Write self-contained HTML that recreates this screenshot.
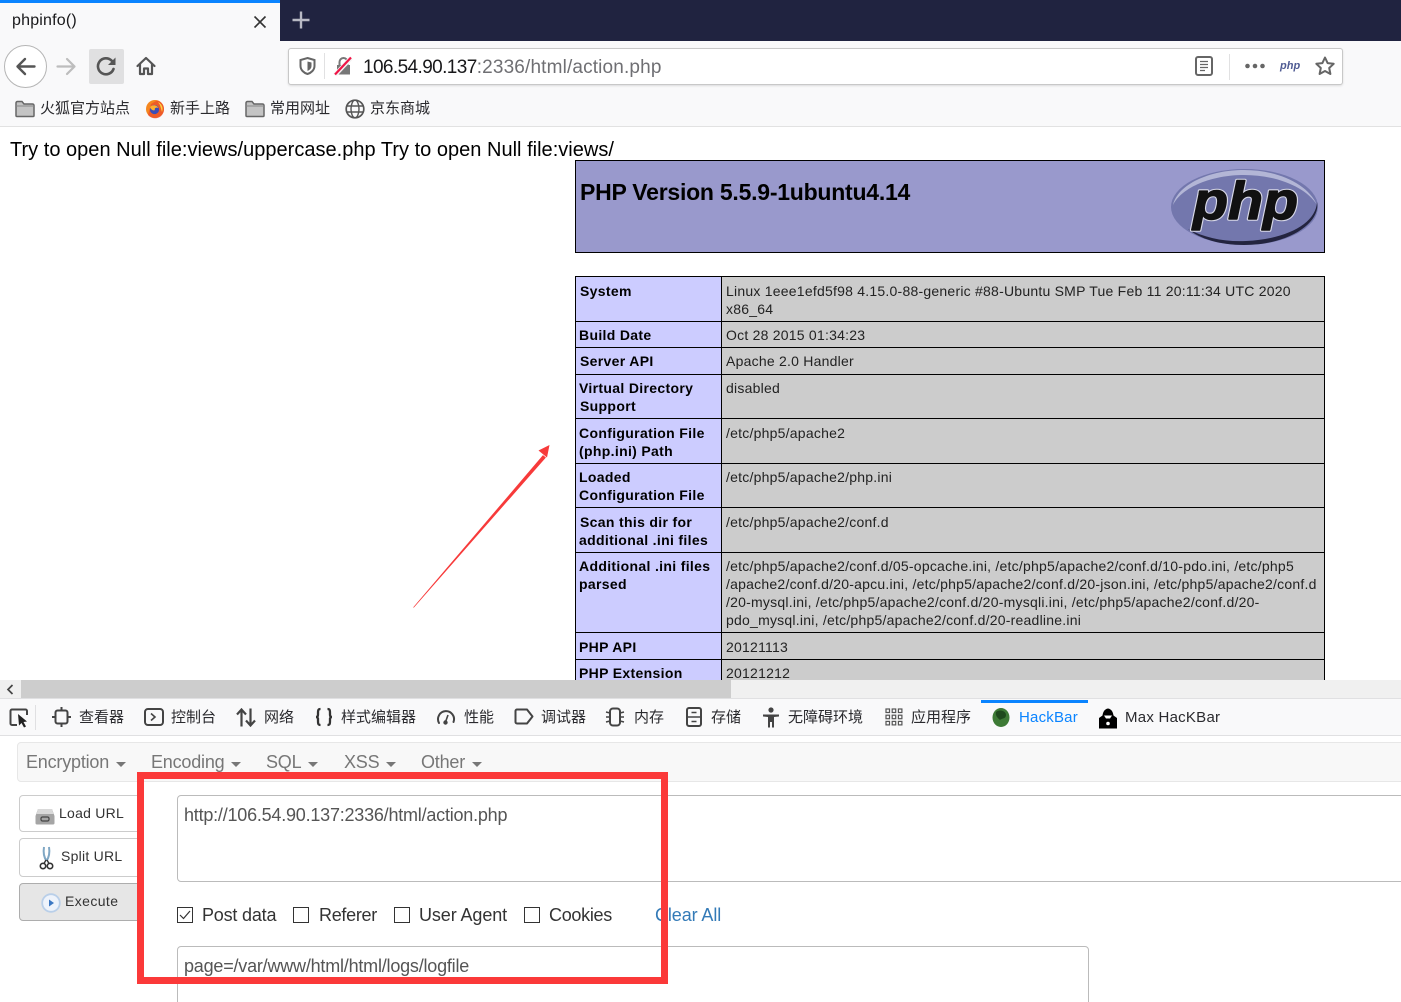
<!DOCTYPE html>
<html lang="zh"><head><meta charset="utf-8"><title>phpinfo()</title>
<style>
html,body{margin:0;padding:0;width:1401px;height:1002px;overflow:hidden;background:#fff}
body{position:relative;font-family:"Liberation Sans","Noto Sans CJK SC",sans-serif;color:#000}
.a,.t,.h,.c,.z{position:absolute}
.t,.h,.c,.z{white-space:nowrap}
svg{position:absolute;overflow:visible}
.h{font:bold 14px/18px "Liberation Sans",sans-serif;color:#000;letter-spacing:.33px}
.c{font:14px/18px "Liberation Sans",sans-serif;color:#222;letter-spacing:.23px}
.b{font-size:15px;line-height:20px;color:#2a2a2e;position:absolute;white-space:nowrap}
.m{position:absolute;font-size:18px;line-height:24px;color:#777;white-space:nowrap;letter-spacing:-.2px}
.m:after{content:"";position:absolute;right:-17px;top:12px;border:5px solid transparent;border-top-color:#777;border-bottom:0}
.btn{position:absolute;left:19px;width:122px;border:1px solid #ccc;border-radius:4px;background:#fff;box-sizing:border-box}
.bt{position:absolute;font-size:14px;line-height:20px;color:#333;white-space:nowrap;letter-spacing:.25px}
.l{font-size:18px;line-height:24px;color:#333;position:absolute;white-space:nowrap;letter-spacing:-.15px}
.ck{position:absolute;top:907px;width:14px;height:14px;border:1px solid #333;background:#fff}
</style></head><body>

<!-- tab bar -->
<div class="a" style="left:0;top:0;width:1401px;height:41px;background:#202340"></div>
<div class="a" style="left:0;top:0;width:280px;height:41px;background:#f9f9fa"></div>
<div class="a" style="left:0;top:0;width:280px;height:3px;background:#0a84ff"></div>
<div class="t" style="left:12px;top:11px;font-size:16px;line-height:20px;letter-spacing:.2px;color:#18181a">phpinfo()</div>
<svg style="left:253px;top:15px" width="14" height="14" viewBox="0 0 14 14"><path d="M1.5 1.5L12.5 12.5M12.5 1.5L1.5 12.5" stroke="#333" stroke-width="1.6" fill="none"/></svg>
<svg style="left:292px;top:11px" width="18" height="18" viewBox="0 0 18 18"><path d="M9 0.5V17.5M0.5 9H17.5" stroke="#b8b9c4" stroke-width="2.4" fill="none"/></svg>

<!-- toolbar -->
<div class="a" style="left:0;top:41px;width:1401px;height:85px;background:#f9f9fa"></div>
<div class="a" style="left:0;top:126px;width:1401px;height:1px;background:#e2e2e2"></div>

<div class="a" style="left:4px;top:45px;width:41px;height:41px;border:1px solid #b5b5b5;border-radius:50%;background:#fff"></div>
<svg style="left:15px;top:56px" width="21" height="21" viewBox="0 0 21 21"><path d="M19.5 10.5H2.5M10 3L2.5 10.5L10 18" stroke="#555" stroke-width="2.4" fill="none" stroke-linecap="round" stroke-linejoin="round"/></svg>
<svg style="left:56px;top:56px" width="21" height="21" viewBox="0 0 21 21"><path d="M1.5 10.5H18.5M11 3L18.5 10.5L11 18" stroke="#bdbdbd" stroke-width="2.2" fill="none" stroke-linecap="round" stroke-linejoin="round"/></svg>
<div class="a" style="left:89px;top:49px;width:35px;height:35px;background:#e0e0e1;border-radius:2px"></div>
<svg style="left:96px;top:56px" width="21" height="21" viewBox="0 0 21 21"><path d="M17.5 13A8 8 0 1 1 15.5 4.5L18 7" stroke="#555" stroke-width="2.6" fill="none" stroke-linecap="round"/><path d="M19.5 1.5V9H12Z" fill="#555"/></svg>
<svg style="left:136px;top:56px" width="20" height="20" viewBox="0 0 20 20"><path d="M1.5 10L10 2L18.5 10M4 8V18H8V12.5H12V18H16V8" stroke="#555" stroke-width="2.2" fill="none" stroke-linejoin="round" stroke-linecap="round"/></svg>

<!-- url bar -->
<div class="a" style="left:288px;top:48px;width:1053px;height:35px;background:#fff;border:1px solid #c8c8c8;border-radius:3px;box-shadow:0 1px 2px rgba(0,0,0,.12)"></div>
<svg style="left:299px;top:57px" width="17" height="18" viewBox="0 0 17 18"><path d="M8.5 1L15.5 3V9C15.5 13 12 16 8.5 17C5 16 1.5 13 1.5 9V3Z" stroke="#666" stroke-width="2" fill="none"/><path d="M8.5 4.5L12.5 5.5V9C12.5 11.5 10.5 13 8.5 14Z" fill="#666"/></svg>
<div class="a" style="left:324px;top:53px;width:1px;height:26px;background:#e1e1e2"></div>
<svg style="left:334px;top:56px" width="18" height="20" viewBox="0 0 18 20"><path d="M3 9H16V18.5H3Z" fill="#777"/><path d="M5.5 9V6A4 4 0 0 1 13.5 6V9" stroke="#777" stroke-width="2" fill="none"/><path d="M1 19L17 2" stroke="#f4f4f4" stroke-width="4.5"/><path d="M1 18.5L17 1.5" stroke="#f01446" stroke-width="2.2"/></svg>
<div class="t" style="left:363px;top:56px;font-size:19px;line-height:24px;letter-spacing:-.6px;color:#18181a">106.54.90.137<span style="color:#6f6f73;letter-spacing:.15px">:2336/html/action.php</span></div>
<svg style="left:1195px;top:56px" width="18" height="20" viewBox="0 0 18 20"><rect x="1" y="1" width="16" height="18" rx="2" stroke="#666" stroke-width="2" fill="none"/><path d="M5 5.5H13M5 8.5H13M5 11.5H13M5 14.5H10" stroke="#666" stroke-width="1.2"/></svg>
<div class="a" style="left:1229px;top:54px;width:1px;height:26px;background:#e1e1e2"></div>
<svg style="left:1245px;top:62px" width="20" height="8" viewBox="0 0 20 8"><circle cx="2.5" cy="4" r="2.3" fill="#666"/><circle cx="10" cy="4" r="2.3" fill="#666"/><circle cx="17.5" cy="4" r="2.3" fill="#666"/></svg>
<div class="t" style="left:1280px;top:58px;font:italic bold 11px/16px 'Liberation Sans',sans-serif;color:#4f5b93">php</div>
<svg style="left:1315px;top:56px" width="20" height="20" viewBox="0 0 20 20"><path d="M10 1.5L12.6 7.1L18.7 7.8L14.2 12L15.4 18L10 15L4.6 18L5.8 12L1.3 7.8L7.4 7.1Z" stroke="#666" stroke-width="2" fill="none" stroke-linejoin="round"/></svg>

<!-- bookmarks -->
<svg style="left:15px;top:100px" width="20" height="18" viewBox="0 0 20 18"><path d="M1 3A1.5 1.5 0 0 1 2.5 1.5H7L9 4H17.5A1.5 1.5 0 0 1 19 5.5V15.5A1 1 0 0 1 18 16.5H2A1 1 0 0 1 1 15.5Z" fill="#c4c4c4" stroke="#666" stroke-width="1.5"/><path d="M1 6H19" stroke="#888"/></svg>
<div class="b" style="left:40px;top:99px">火狐官方站点</div>
<svg style="left:145px;top:99px" width="20" height="20" viewBox="0 0 20 20"><circle cx="10" cy="10" r="9" fill="#f5871f"/><path d="M19 10A9 9 0 0 1 3 16L6 5L12 1.5C16 2 19 6 19 10Z" fill="#e8362d" opacity=".55"/><circle cx="9.5" cy="10.5" r="4.6" fill="#3a4db8"/><path d="M5 8C8 5 12 6 13.5 9C11 8 9 9.5 10 11C8.5 12 6 11 5 8Z" fill="#ffb02e"/><path d="M13 3C17 5 18.5 9 17 13L15 6Z" fill="#ffd23f"/></svg>
<div class="b" style="left:170px;top:99px">新手上路</div>
<svg style="left:245px;top:100px" width="20" height="18" viewBox="0 0 20 18"><path d="M1 3A1.5 1.5 0 0 1 2.5 1.5H7L9 4H17.5A1.5 1.5 0 0 1 19 5.5V15.5A1 1 0 0 1 18 16.5H2A1 1 0 0 1 1 15.5Z" fill="#c4c4c4" stroke="#666" stroke-width="1.5"/><path d="M1 6H19" stroke="#888"/></svg>
<div class="b" style="left:270px;top:99px">常用网址</div>
<svg style="left:345px;top:99px" width="20" height="20" viewBox="0 0 20 20"><circle cx="10" cy="10" r="8.8" stroke="#555" stroke-width="1.7" fill="none"/><ellipse cx="10" cy="10" rx="4" ry="8.8" stroke="#555" stroke-width="1.4" fill="none"/><path d="M1.5 7H18.5M1.5 13H18.5" stroke="#555" stroke-width="1.4"/></svg>
<div class="b" style="left:370px;top:99px">京东商城</div>

<!-- page -->
<div class="t" style="left:10px;top:138px;font-size:20px;line-height:24px;letter-spacing:.015px;color:#000">Try to open Null file:views/uppercase.php Try to open Null file:views/</div>

<!-- header table -->
<div class="a" style="left:575px;top:160px;width:748px;height:91px;background:#9999cc;border:1px solid #000"></div>
<div class="t" style="left:580px;top:178px;font:bold 23px/28px 'Liberation Sans',sans-serif;letter-spacing:-.24px;color:#000">PHP Version 5.5.9-1ubuntu4.14</div>
<svg style="left:1170px;top:167px" width="150" height="80" viewBox="0 0 150 80">
  <ellipse cx="74.500" cy="40" rx="73.500" ry="38" fill="#7377ad"/>
  <path d="M3 38C8 17 40 3 74 3C108 3 138 17 147 38C136 20 106 8 74 8C42 8 12 20 3 38Z" fill="#b3b6d6"/>
  <path d="M147 35C151 55 120 78 74 78C50 78 30 72 18 62C35 71 55 75 76 74C118 72 146 56 147 35Z" fill="#23243f"/>
  <text x="23" y="52" textLength="105" lengthAdjust="spacingAndGlyphs" font-family="Liberation Sans,sans-serif" font-weight="bold" font-style="italic" font-size="53" fill="#111" stroke="#d8d9e8" stroke-width="3.500" stroke-linejoin="round">php</text>
  <text x="23" y="52" textLength="105" lengthAdjust="spacingAndGlyphs" font-family="Liberation Sans,sans-serif" font-weight="bold" font-style="italic" font-size="53" fill="#111" stroke="#111" stroke-width="1.400" stroke-linejoin="round">php</text>
</svg>

<!-- info table -->
<div class="a" style="left:575px;top:276px;width:750px;height:404px;overflow:hidden;background:#000">
  <div class="a" style="left:1px;top:1px;width:145px;height:44px;background:#ccccff"></div><div class="a" style="left:147px;top:1px;width:602px;height:44px;background:#cccccc"></div>
  <div class="a" style="left:1px;top:46px;width:145px;height:25px;background:#ccccff"></div><div class="a" style="left:147px;top:46px;width:602px;height:25px;background:#cccccc"></div>
  <div class="a" style="left:1px;top:72px;width:145px;height:26px;background:#ccccff"></div><div class="a" style="left:147px;top:72px;width:602px;height:26px;background:#cccccc"></div>
  <div class="a" style="left:1px;top:99px;width:145px;height:43px;background:#ccccff"></div><div class="a" style="left:147px;top:99px;width:602px;height:43px;background:#cccccc"></div>
  <div class="a" style="left:1px;top:143px;width:145px;height:44px;background:#ccccff"></div><div class="a" style="left:147px;top:143px;width:602px;height:44px;background:#cccccc"></div>
  <div class="a" style="left:1px;top:188px;width:145px;height:43px;background:#ccccff"></div><div class="a" style="left:147px;top:188px;width:602px;height:43px;background:#cccccc"></div>
  <div class="a" style="left:1px;top:232px;width:145px;height:44px;background:#ccccff"></div><div class="a" style="left:147px;top:232px;width:602px;height:44px;background:#cccccc"></div>
  <div class="a" style="left:1px;top:277px;width:145px;height:79px;background:#ccccff"></div><div class="a" style="left:147px;top:277px;width:602px;height:79px;background:#cccccc"></div>
  <div class="a" style="left:1px;top:357px;width:145px;height:26px;background:#ccccff"></div><div class="a" style="left:147px;top:357px;width:602px;height:26px;background:#cccccc"></div>
  <div class="a" style="left:1px;top:384px;width:145px;height:20px;background:#ccccff"></div><div class="a" style="left:147px;top:384px;width:602px;height:20px;background:#cccccc"></div>

  <div class="h" style="left:5px;top:6px">System</div>
  <div class="c" style="left:151px;top:6px">Linux 1eee1efd5f98 4.15.0-88-generic #88-Ubuntu SMP Tue Feb 11 20:11:34 UTC 2020<br>x86_64</div>
  <div class="h" style="left:4px;top:50px">Build Date</div>
  <div class="c" style="left:151px;top:50px">Oct 28 2015 01:34:23</div>
  <div class="h" style="left:5px;top:76px">Server API</div>
  <div class="c" style="left:151px;top:76px">Apache 2.0 Handler</div>
  <div class="h" style="left:4px;top:103px">Virtual Directory<br><span style="margin-left:1px">Support</span></div>
  <div class="c" style="left:151px;top:103px">disabled</div>
  <div class="h" style="left:4px;top:148px">Configuration File<br>(php.ini) Path</div>
  <div class="c" style="left:151px;top:148px">/etc/php5/apache2</div>
  <div class="h" style="left:4px;top:192px">Loaded<br>Configuration File</div>
  <div class="c" style="left:151px;top:192px">/etc/php5/apache2/php.ini</div>
  <div class="h" style="left:4px;top:237px"><span style="margin-left:1px">Scan this dir for</span><br>additional .ini files</div>
  <div class="c" style="left:151px;top:237px">/etc/php5/apache2/conf.d</div>
  <div class="h" style="left:4px;top:281px">Additional .ini files<br>parsed</div>
  <div class="c" style="left:151px;top:281px">/etc/php5/apache2/conf.d/05-opcache.ini, /etc/php5/apache2/conf.d/10-pdo.ini, /etc/php5<br>/apache2/conf.d/20-apcu.ini, /etc/php5/apache2/conf.d/20-json.ini, /etc/php5/apache2/conf.d<br>/20-mysql.ini, /etc/php5/apache2/conf.d/20-mysqli.ini, /etc/php5/apache2/conf.d/20-<br>pdo_mysql.ini, /etc/php5/apache2/conf.d/20-readline.ini</div>
  <div class="h" style="left:4px;top:362px">PHP API</div>
  <div class="c" style="left:151px;top:362px">20121113</div>
  <div class="h" style="left:4px;top:388px">PHP Extension</div>
  <div class="c" style="left:151px;top:388px">20121212</div>
</div>

<!-- red arrow -->
<svg style="left:410px;top:440px" width="145" height="172" viewBox="0 0 145 172"><path d="M3.500 167.500L133 15.500L135.500 17.500Z" fill="#f73a3a" stroke="#f73a3a" stroke-width=".6"/><path d="M139.500 5L137 17.500L128.500 10.500Z" fill="#f73a3a"/></svg>

<!-- horizontal scrollbar -->
<div class="a" style="left:0;top:680px;width:1401px;height:18px;background:#f0f0f0"></div>
<div class="a" style="left:21px;top:680px;width:710px;height:18px;background:#cdcdcd"></div>
<svg style="left:6px;top:684px" width="8" height="11" viewBox="0 0 8 11"><path d="M6.500 1L2 5.500L6.500 10" stroke="#444" stroke-width="1.700" fill="none"/></svg>
<div class="a" style="left:0;top:698px;width:1401px;height:1px;background:#e0e0e2"></div>

<!-- devtools toolbar -->
<div class="a" style="left:0;top:699px;width:1401px;height:37px;background:#f9f9fa"></div>
<div class="a" style="left:0;top:735px;width:1401px;height:1px;background:#e0e0e2"></div>
<div class="a" style="left:35px;top:705px;width:1px;height:25px;background:#e0e0e2"></div>
<svg style="left:9px;top:708px" width="22" height="20" viewBox="0 0 22 20"><path d="M8 17H3A1.500 1.500 0 0 1 1.500 15.500V3A1.500 1.500 0 0 1 3 1.500H16.500A1.500 1.500 0 0 1 18 3V7" stroke="#444" stroke-width="2" fill="none"/><path d="M9 6L18 13.500L14.500 14L17 18.500L15 19.500L12.500 15L10 17.500Z" fill="#222"/></svg>
<svg style="left:52px;top:707px" width="19" height="20" viewBox="0 0 19 20"><rect x="3.500" y="3.500" width="12" height="13" rx="2" stroke="#444" stroke-width="2" fill="none"/><path d="M9.500 0V3M9.500 17V20M0 10H3M16 10H19" stroke="#444" stroke-width="2"/></svg>
<div class="b" style="left:79px;top:708px">查看器</div>
<svg style="left:144px;top:708px" width="20" height="18" viewBox="0 0 20 18"><rect x="1" y="1" width="18" height="16" rx="3" stroke="#444" stroke-width="2" fill="none"/><path d="M7 5.500L11 9L7 12.500" stroke="#444" stroke-width="1.600" fill="none"/></svg>
<div class="b" style="left:171px;top:708px">控制台</div>
<svg style="left:236px;top:708px" width="20" height="19" viewBox="0 0 20 19"><path d="M5.500 18.500V2M1 6.500L5.500 1.500L10 6.500M14.500 0.500V17M10 12.500L14.500 17.500L19 12.500" stroke="#444" stroke-width="2.200" fill="none"/></svg>
<div class="b" style="left:264px;top:708px">网络</div>
<svg style="left:315px;top:708px" width="18" height="18" viewBox="0 0 18 18"><path d="M5.500 1C3 1 3 2.500 3 5V7C3 8.200 2.200 9 1 9C2.200 9 3 9.800 3 11V13C3 15.500 3 17 5.500 17M12.500 1C15 1 15 2.500 15 5V7C15 8.200 15.800 9 17 9C15.800 9 15 9.800 15 11V13C15 15.500 15 17 12.500 17" stroke="#333" stroke-width="2.300" fill="none"/></svg>
<div class="b" style="left:341px;top:708px">样式编辑器</div>
<svg style="left:436px;top:707px" width="20" height="20" viewBox="0 0 20 20"><path d="M3 16A8 8 0 1 1 17.500 15" stroke="#444" stroke-width="2" fill="none" stroke-linecap="round"/><circle cx="9.500" cy="15.500" r="2.200" fill="#444"/><path d="M9.500 15L12 8" stroke="#444" stroke-width="1.600"/></svg>
<div class="b" style="left:464px;top:708px">性能</div>
<svg style="left:514px;top:708px" width="20" height="17" viewBox="0 0 20 17"><path d="M3 1.500H13L18.500 8.500L13 15.500H3A1.500 1.500 0 0 1 1.500 14V3A1.500 1.500 0 0 1 3 1.500Z" stroke="#444" stroke-width="2" fill="none" stroke-linejoin="round"/></svg>
<div class="b" style="left:541px;top:708px">调试器</div>
<svg style="left:605px;top:707px" width="20" height="20" viewBox="0 0 20 20"><rect x="5" y="1.500" width="10" height="17" rx="3" stroke="#444" stroke-width="2" fill="none"/><path d="M1 5L5 6M1 10H5M1 15L5 14M19 5L15 6M19 10H15M19 15L15 14" stroke="#444" stroke-width="1.500"/></svg>
<div class="b" style="left:634px;top:708px">内存</div>
<svg style="left:686px;top:707px" width="16" height="20" viewBox="0 0 16 20"><rect x="1" y="1" width="14" height="18" rx="2" stroke="#444" stroke-width="2" fill="none"/><path d="M1 10H15M5.500 5.500H10.500M5.500 14.500H10.500" stroke="#444" stroke-width="1.600"/></svg>
<div class="b" style="left:711px;top:708px">存储</div>
<svg style="left:762px;top:707px" width="18" height="21" viewBox="0 0 18 21"><circle cx="9" cy="3" r="2.600" fill="#444"/><path d="M1 7.500H17V9.500L12 10V20.500H10V15H8V20.500H6V10L1 9.500Z" fill="#444"/></svg>
<div class="b" style="left:788px;top:708px">无障碍环境</div>
<svg style="left:885px;top:708px" width="18" height="18" viewBox="0 0 18 18"><g fill="none" stroke="#555" stroke-width="1.200"><rect x="1" y="1" width="3.500" height="3.500"/><rect x="7.200" y="1" width="3.500" height="3.500"/><rect x="13.400" y="1" width="3.500" height="3.500"/><rect x="1" y="7.200" width="3.500" height="3.500"/><rect x="7.200" y="7.200" width="3.500" height="3.500"/><rect x="13.400" y="7.200" width="3.500" height="3.500"/><rect x="1" y="13.400" width="3.500" height="3.500"/><rect x="7.200" y="13.400" width="3.500" height="3.500"/><rect x="13.400" y="13.400" width="3.500" height="3.500"/></g></svg>
<div class="b" style="left:911px;top:708px">应用程序</div>
<div class="a" style="left:981px;top:700px;width:107px;height:3px;background:#0a84ff"></div>
<svg style="left:991px;top:707px" width="20" height="21" viewBox="0 0 20 21"><ellipse cx="10" cy="10.500" rx="8.500" ry="9.500" fill="#3d7a35"/><path d="M5 5C9 2 15 4 15 8C15 12 11 11 9 13C7 11 4 9 5 5Z" fill="#1f4a1d"/></svg>
<div class="b" style="left:1019px;top:708px;color:#0a84ff;letter-spacing:.2px">HackBar</div>
<svg style="left:1098px;top:708px" width="20" height="21" viewBox="0 0 20 21"><path d="M10 0.500C13.500 1 15 4 15.500 7.500L19 10V20.500H1V10L4.500 7.500C5 4 6.500 1 10 0.500Z" fill="#000"/><path d="M6 7.500H14L12 10.500H8Z" fill="#fff"/><circle cx="10" cy="15.500" r="1.800" fill="#fff"/></svg>
<div class="b" style="left:1125px;top:708px;letter-spacing:.25px">Max HacKBar</div>

<!-- hackbar panel -->
<div class="a" style="left:0;top:736px;width:1401px;height:266px;background:#fff"></div>
<div class="a" style="left:17px;top:742px;width:1390px;height:38px;background:#f8f8f8;border:1px solid #e7e7e7;border-radius:4px;box-sizing:content-box"></div>
<div class="m" style="left:26px;top:750px">Encryption</div>
<div class="m" style="left:151px;top:750px">Encoding</div>
<div class="m" style="left:266px;top:750px">SQL</div>
<div class="m" style="left:344px;top:750px">XSS</div>
<div class="m" style="left:421px;top:750px">Other</div>

<div class="btn" style="top:795px;height:37px"></div>
<div class="btn" style="top:838px;height:39px"></div>
<div class="btn" style="top:883px;height:38px;background:#e6e6e6;border-color:#adadad"></div>
<svg style="left:35px;top:807px" width="20" height="18" viewBox="0 0 20 18"><path d="M3 2H17L19.500 9V16A1.500 1.500 0 0 1 18 17.500H2A1.500 1.500 0 0 1 .5 16V9Z" fill="#a5a5a5"/><path d="M3 2H17L18.500 7H1.500Z" fill="#d9d9d9"/><rect x="6" y="10" width="8" height="4" rx="1.500" fill="none" stroke="#444" stroke-width="1.200"/></svg>
<div class="bt" style="left:59px;top:803px">Load URL</div>
<svg style="left:39px;top:846px" width="15" height="24" viewBox="0 0 15 24"><path d="M5 1C4 7 5.500 12 7.500 15M10 1C11 7 9.500 12 7.500 15" stroke="#7fa7c4" stroke-width="2" fill="none"/><circle cx="4" cy="20" r="2.700" stroke="#333" stroke-width="1.600" fill="none"/><circle cx="11" cy="20" r="2.700" stroke="#333" stroke-width="1.600" fill="none"/><path d="M5 17.500L7 14M10 17.500L8 14" stroke="#333" stroke-width="1.400"/></svg>
<div class="bt" style="left:61px;top:846px">Split URL</div>
<svg style="left:41px;top:893px" width="20" height="20" viewBox="0 0 20 20"><circle cx="10" cy="10" r="8.800" fill="#eef3fb" stroke="#b9cfe9" stroke-width="1.800"/><path d="M8 6.500L13 10L8 13.500Z" fill="#3c78c3"/></svg>
<div class="bt" style="left:65px;top:891px;letter-spacing:.4px">Execute</div>

<div class="a" style="left:177px;top:795px;width:1300px;height:85px;border:1px solid #bbb;border-radius:4px;background:#fff"></div>
<div class="l" style="left:184px;top:803px;color:#555;letter-spacing:-.22px">http://106.54.90.137:2336/html/action.php</div>

<div class="ck" style="left:177px"></div>
<svg style="left:179px;top:910px" width="12" height="10" viewBox="0 0 12 10"><path d="M1 5L4.500 8.500L11 1" stroke="#333" stroke-width="1.200" fill="none"/></svg>
<div class="l" style="left:202px;top:903px;letter-spacing:-.2px">Post data</div>
<div class="ck" style="left:293px"></div>
<div class="l" style="left:319px;top:903px;letter-spacing:-.3px">Referer</div>
<div class="ck" style="left:394px"></div>
<div class="l" style="left:419px;top:903px;letter-spacing:-.1px">User Agent</div>
<div class="ck" style="left:524px"></div>
<div class="l" style="left:549px;top:903px;letter-spacing:-.3px">Cookies</div>
<div class="l" style="left:655px;top:903px;color:#337ab7;letter-spacing:-.1px">Clear All</div>

<div class="a" style="left:177px;top:946px;width:910px;height:70px;border:1px solid #bbb;border-radius:4px;background:#fff"></div>
<div class="l" style="left:184px;top:954px;color:#555;letter-spacing:-.21px">page=/var/www/html/html/logs/logfile</div>

<!-- red annotation box -->
<div class="a" style="left:137px;top:772px;width:517px;height:198px;border:7px solid #fb3939"></div>

</body></html>
